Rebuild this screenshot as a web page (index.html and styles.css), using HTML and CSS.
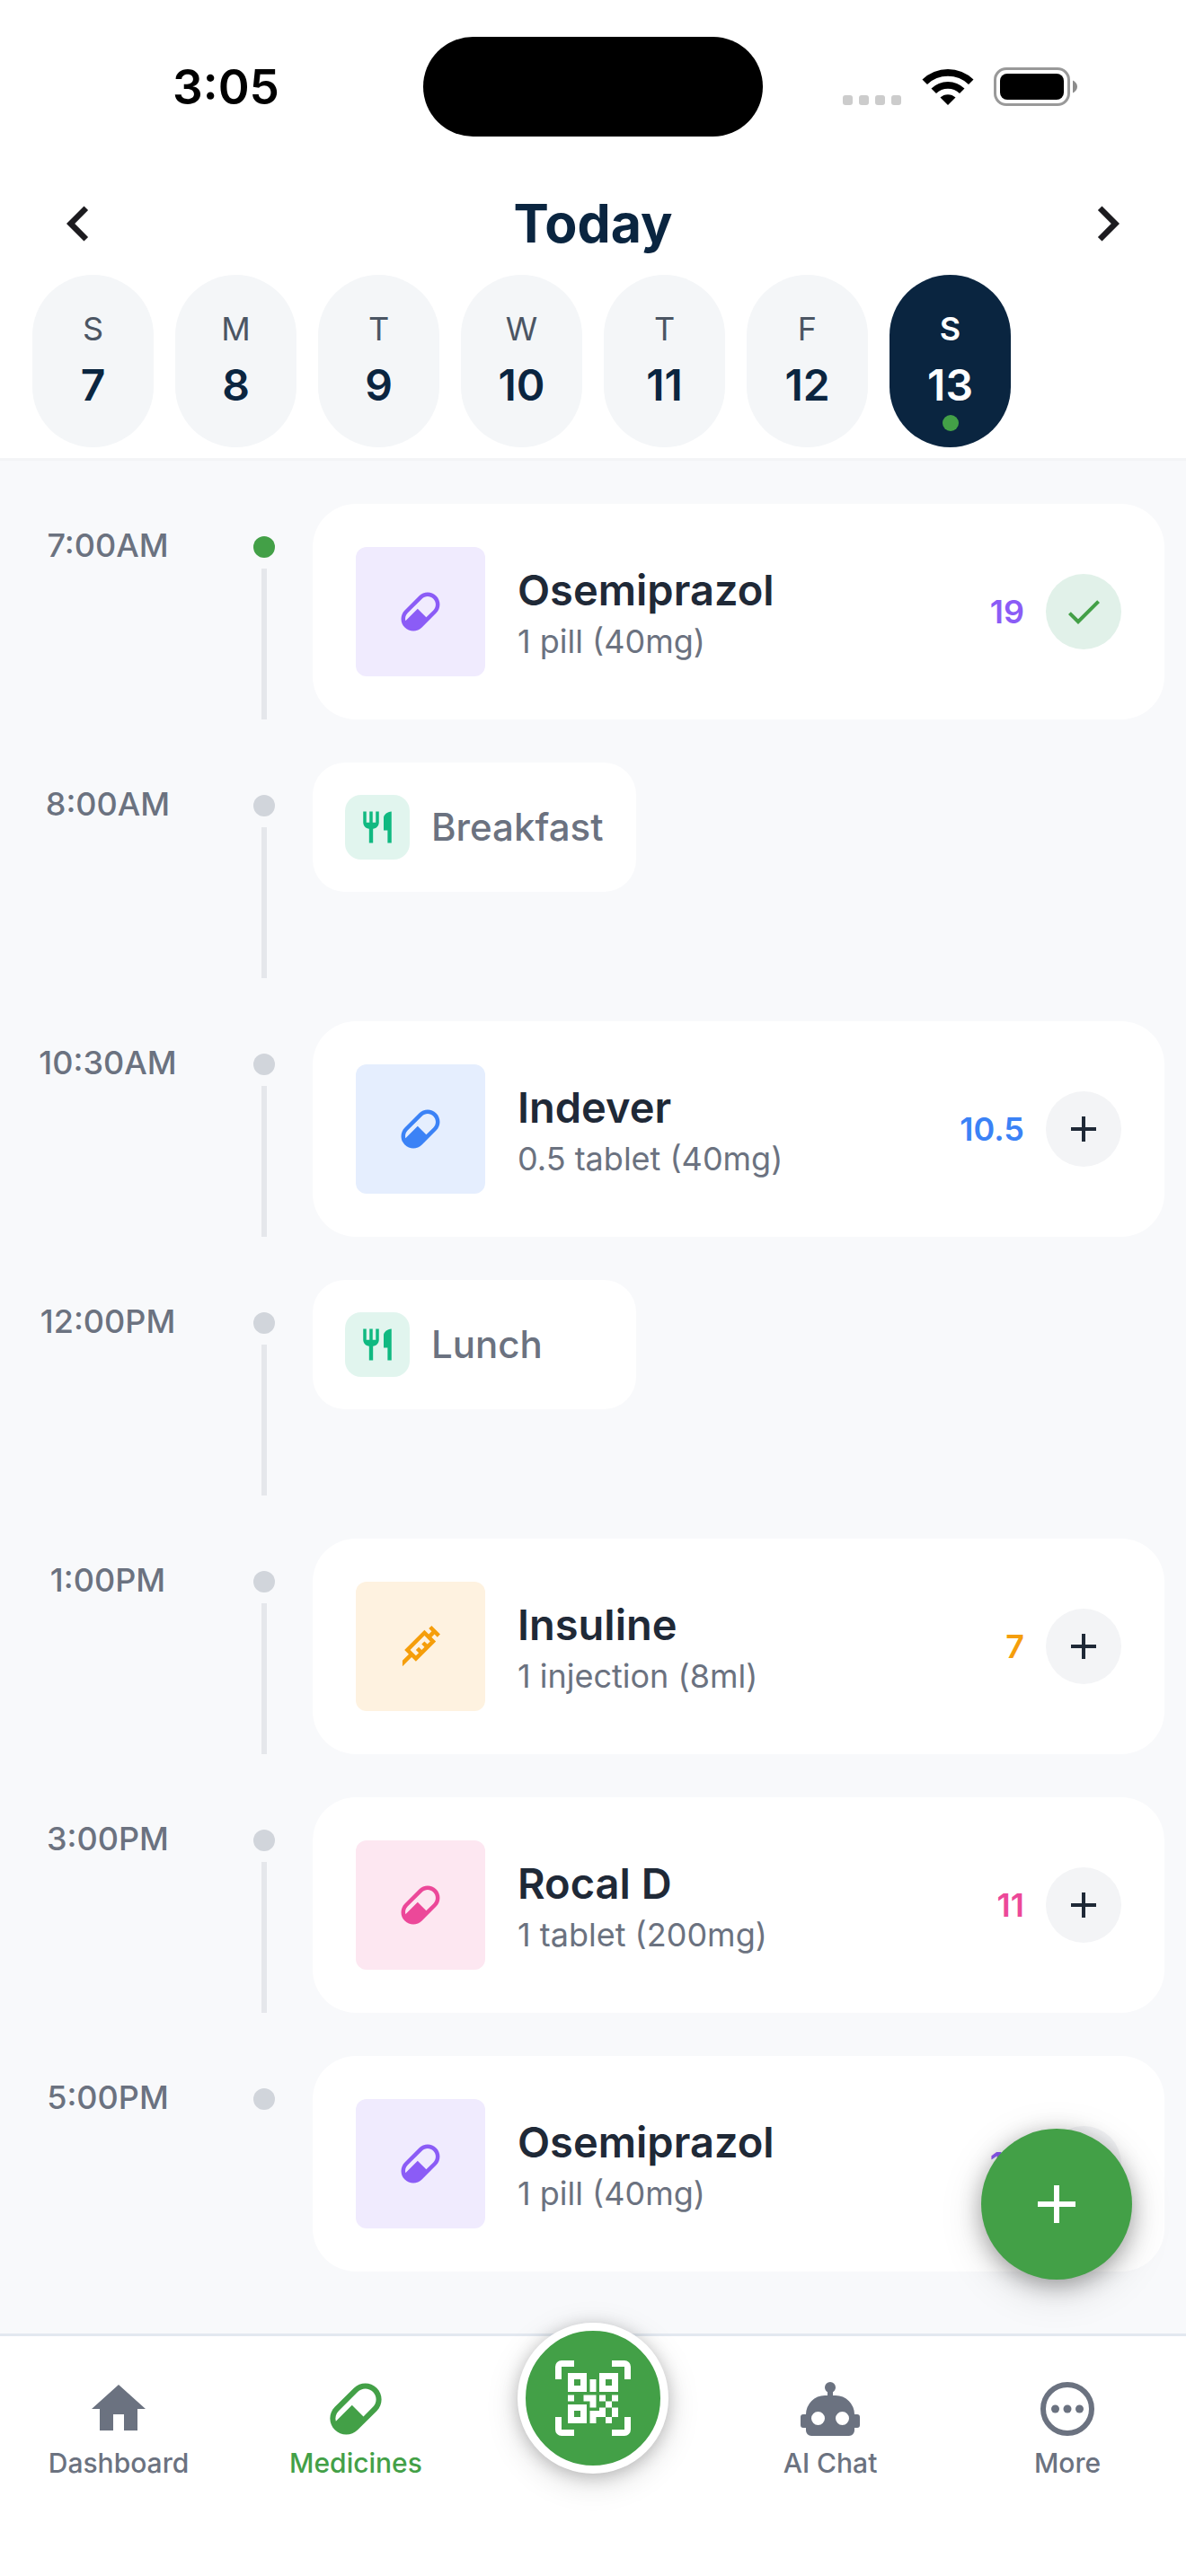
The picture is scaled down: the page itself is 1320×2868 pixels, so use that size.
FILE: index.html
```html
<!DOCTYPE html>
<html lang="en">
<head>
<meta charset="utf-8">
<meta name="viewport" content="width=device-width, initial-scale=1">
<title>Medicines</title>
<link rel="stylesheet" href="styles.css">
</head>
<body>
<svg class="sprite" aria-hidden="true">
  <symbol id="i-left" viewBox="0 0 24 24"><path d="M15.41,16.58L10.83,12L15.41,7.41L14,6L8,12L14,18L15.41,16.58Z"/></symbol>
  <symbol id="i-right" viewBox="0 0 24 24"><path d="M8.59,16.58L13.17,12L8.59,7.41L10,6L16,12L10,18L8.59,16.58Z"/></symbol>
  <symbol id="i-pill" viewBox="0 0 24 24"><path d="M4.22,11.29L11.29,4.22C13.64,1.88 17.43,1.88 19.78,4.22C22.12,6.56 22.12,10.36 19.78,12.71L12.71,19.78C10.36,22.12 6.56,22.12 4.22,19.78C1.88,17.43 1.88,13.64 4.22,11.29M5.64,12.71C4.59,13.75 4.24,15.24 4.6,16.57L10.59,10.59L14.83,14.83L18.36,11.29C19.93,9.73 19.93,7.2 18.36,5.64C16.8,4.07 14.27,4.07 12.71,5.64L5.64,12.71Z"/></symbol>
  <symbol id="i-needle" viewBox="0 0 24 24"><path d="M11.15,15.18L9.73,13.77L11.15,12.35L12.56,13.77L13.97,12.35L12.56,10.94L13.97,9.53L15.39,10.94L16.8,9.53L13.97,6.7L6.9,13.77L9.73,16.6L11.15,15.18M3.08,19L6.2,15.89L4.08,13.77L13.97,3.87L16.1,6L17.5,4.58L16.1,3.16L17.5,1.75L21.75,6L20.34,7.4L18.92,6L17.5,7.4L19.63,9.53L9.73,19.42L7.61,17.3L3.08,21.84V19Z"/></symbol>
  <symbol id="i-meal" viewBox="0 0 24 24"><path d="M11,9H9V2H7V9H5V2H3V9C3,11.12 4.66,12.84 6.75,12.97V22H9.25V12.97C11.34,12.84 13,11.12 13,9V2H11V9M16,6V14H18.5V22H21V2C18.24,2 16,4.24 16,6Z"/></symbol>
  <symbol id="i-check" viewBox="0 0 24 24"><path d="M21,7L9,19L3.5,13.5L4.91,12.09L9,16.17L19.59,5.59L21,7Z"/></symbol>
  <symbol id="i-plus" viewBox="0 0 24 24"><path d="M19,13H13V19H11V13H5V11H11V5H13V11H19V13Z"/></symbol>
  <symbol id="i-home" viewBox="0 0 24 24"><path d="M10,20V14H14V20H19V12H22L12,3L2,12H5V20H10Z"/></symbol>
  <symbol id="i-scan" viewBox="0 0 24 24"><path d="M4,4H10V10H4V4M20,4V10H14V4H20M14,15H16V13H14V11H16V13H18V11H20V13H18V15H20V18H18V20H16V18H13V20H11V16H14V15M16,15V18H18V15H16M4,20V14H10V20H4M6,6V8H8V6H6M16,6V8H18V6H16M6,16V18H8V16H6M4,11H6V13H4V11M9,11H13V15H11V13H9V11M11,6H13V10H11V6M2,2V6H0V2A2,2 0 0,1 2,0H6V2H2M22,0A2,2 0 0,1 24,2V6H22V2H18V0H22M2,18V22H6V24H2A2,2 0 0,1 0,22V18H2M22,22V18H24V22A2,2 0 0,1 22,24H18V22H22Z"/></symbol>
  <symbol id="i-robot" viewBox="0 0 24 24"><path d="M12,2A2,2 0 0,1 14,4C14,4.74 13.6,5.39 13,5.73V7H14A7,7 0 0,1 21,14H22A1,1 0 0,1 23,15V18A1,1 0 0,1 22,19H21V20A2,2 0 0,1 19,22H5A2,2 0 0,1 3,20V19H2A1,1 0 0,1 1,18V15A1,1 0 0,1 2,14H3A7,7 0 0,1 10,7H11V5.73C10.4,5.39 10,4.74 10,4A2,2 0 0,1 12,2M7.5,13A2.5,2.5 0 0,0 5,15.5A2.5,2.5 0 0,0 7.5,18A2.5,2.5 0 0,0 10,15.5A2.5,2.5 0 0,0 7.5,13M16.5,13A2.5,2.5 0 0,0 14,15.5A2.5,2.5 0 0,0 16.5,18A2.5,2.5 0 0,0 19,15.5A2.5,2.5 0 0,0 16.5,13Z"/></symbol>
  <symbol id="i-more" viewBox="0 0 24 24"><circle cx="12" cy="12" r="9" fill="none" stroke="currentColor" stroke-width="2"/><circle cx="7.5" cy="12" r="1.5"/><circle cx="12" cy="12" r="1.5"/><circle cx="16.5" cy="12" r="1.5"/></symbol>
</svg>

<div class="app">
  <header class="top">
    <div class="status">
      <div class="status-side status-left"><span class="clock">3:05</span></div>
      <div class="island"></div>
      <div class="status-side status-right">
        <svg class="signal" viewBox="0 0 66 43" aria-hidden="true"><rect x="0" y="31" width="11" height="11" rx="3"/><rect x="18" y="31" width="11" height="11" rx="3"/><rect x="36" y="31" width="11" height="11" rx="3"/><rect x="54" y="31" width="11" height="11" rx="3"/></svg>
        <svg class="wifi" viewBox="0 0 58 43" aria-hidden="true"><path d="M0.500 13.500A41 41 0 0 1 57.500 13.500L52 19A33 33 0 0 0 6 19Z"/><path d="M10.500 23.500A26.500 26.500 0 0 1 47.500 23.500L42 29A18.500 18.500 0 0 0 16 29Z"/><path d="M20.500 33.500A12.500 12.500 0 0 1 37.500 33.500L29 42Z"/></svg>
        <svg class="battery" viewBox="0 0 94 43" aria-hidden="true"><rect x="1.500" y="1.500" width="82" height="40" rx="12.500" fill="none" stroke="#999" stroke-width="3"/><rect x="7" y="7" width="71" height="29" rx="8"/><path d="M88 14.500C91 16 93 18.500 93 21.500S91 27 88 28.500Z" fill="#8c8c8c"/></svg>
      </div>
    </div>
    <div class="title-row">
      <button class="icon-btn" type="button" aria-label="Previous week"><svg class="chevron"><use href="#i-left"/></svg></button>
      <h1>Today</h1>
      <button class="icon-btn" type="button" aria-label="Next week"><svg class="chevron"><use href="#i-right"/></svg></button>
    </div>
    <div class="days">
      <button class="day" type="button"><span class="dow">S</span><span class="num">7</span></button>
      <button class="day" type="button"><span class="dow">M</span><span class="num">8</span></button>
      <button class="day" type="button"><span class="dow">T</span><span class="num">9</span></button>
      <button class="day" type="button"><span class="dow">W</span><span class="num">10</span></button>
      <button class="day" type="button"><span class="dow">T</span><span class="num">11</span></button>
      <button class="day" type="button"><span class="dow">F</span><span class="num">12</span></button>
      <button class="day selected" type="button" aria-pressed="true"><span class="dow">S</span><span class="num">13</span><span class="today-dot"></span></button>
    </div>
  </header>

  <main class="main">
    <ol class="timeline">
      <li class="slot">
        <time class="time">7:00AM</time>
        <div class="rail done"></div>
        <article class="card purple">
          <div class="thumb"><svg><use href="#i-pill"/></svg></div>
          <div class="info"><h2>Osemiprazol</h2><p>1 pill (40mg)</p></div>
          <span class="stock">19</span>
          <button class="take taken" type="button" aria-label="Taken"><svg><use href="#i-check"/></svg></button>
        </article>
      </li>
      <li class="slot">
        <time class="time">8:00AM</time>
        <div class="rail"></div>
        <div class="meal"><span class="meal-icon"><svg><use href="#i-meal"/></svg></span><span>Breakfast</span></div>
      </li>
      <li class="slot">
        <time class="time">10:30AM</time>
        <div class="rail"></div>
        <article class="card blue">
          <div class="thumb"><svg><use href="#i-pill"/></svg></div>
          <div class="info"><h2>Indever</h2><p>0.5 tablet (40mg)</p></div>
          <span class="stock">10.5</span>
          <button class="take" type="button" aria-label="Mark as taken"><svg><use href="#i-plus"/></svg></button>
        </article>
      </li>
      <li class="slot">
        <time class="time">12:00PM</time>
        <div class="rail"></div>
        <div class="meal"><span class="meal-icon"><svg><use href="#i-meal"/></svg></span><span>Lunch</span></div>
      </li>
      <li class="slot">
        <time class="time">1:00PM</time>
        <div class="rail"></div>
        <article class="card orange">
          <div class="thumb"><svg><use href="#i-needle"/></svg></div>
          <div class="info"><h2>Insuline</h2><p>1 injection (8ml)</p></div>
          <span class="stock">7</span>
          <button class="take" type="button" aria-label="Mark as taken"><svg><use href="#i-plus"/></svg></button>
        </article>
      </li>
      <li class="slot">
        <time class="time">3:00PM</time>
        <div class="rail"></div>
        <article class="card pink">
          <div class="thumb"><svg><use href="#i-pill"/></svg></div>
          <div class="info"><h2>Rocal D</h2><p>1 tablet (200mg)</p></div>
          <span class="stock">11</span>
          <button class="take" type="button" aria-label="Mark as taken"><svg><use href="#i-plus"/></svg></button>
        </article>
      </li>
      <li class="slot">
        <time class="time">5:00PM</time>
        <div class="rail last"></div>
        <article class="card purple">
          <div class="thumb"><svg><use href="#i-pill"/></svg></div>
          <div class="info"><h2>Osemiprazol</h2><p>1 pill (40mg)</p></div>
          <span class="stock">19</span>
          <button class="take" type="button" aria-label="Mark as taken"><svg><use href="#i-plus"/></svg></button>
        </article>
      </li>
    </ol>
    <button class="fab" type="button" aria-label="Add medicine"><svg><use href="#i-plus"/></svg></button>
  </main>

  <nav class="tabs" aria-label="Main">
    <a class="tab" href="#dashboard"><svg><use href="#i-home"/></svg>Dashboard</a>
    <a class="tab active" href="#medicines" aria-current="page"><svg><use href="#i-pill"/></svg>Medicines</a>
    <a class="scan" href="#scan" aria-label="Scan code"><svg><use href="#i-scan"/></svg></a>
    <a class="tab" href="#chat"><svg><use href="#i-robot"/></svg>AI Chat</a>
    <a class="tab" href="#more"><svg><use href="#i-more"/></svg>More</a>
  </nav>
</div>
</body>
</html>
```
FILE: styles.css
```css
:root {
  --navy: #0a2540;
  --ink: #1f2937;
  --muted: #6b7280;
  --green: #43a047;
}

* { box-sizing: border-box; }

body {
  margin: 0;
  font-family: Inter, "Liberation Sans", sans-serif;
  color: var(--ink);
  background: #fff;
}

h1, h2, p, ol { margin: 0; padding: 0; }
button { border: 0; padding: 0; background: none; font: inherit; color: inherit; }
a { color: inherit; text-decoration: none; }
svg { display: block; flex: none; fill: currentColor; }
.sprite { position: absolute; width: 0; height: 0; }

.app { display: flex; flex-direction: column; min-height: 100vh; }

/* Header */
.top { background: #fff; border-bottom: 3px solid #f3f4f6; padding-bottom: 12px; }

.status {
  display: grid;
  grid-template-columns: 1fr 378px 1fr;
  align-items: center;
  padding: 41px 0 40px;
  color: #000;
}
.status-side { display: flex; justify-content: center; align-items: center; }
.status-left { padding-left: 32px; }
.status-right { padding-right: 32px; gap: 22px; }
.clock { font-size: 53px; line-height: 66px; font-weight: 600; }
.island { height: 111px; border-radius: 56px; background: #000; }
.signal { width: 66px; height: 43px; fill: #ccc; }
.wifi { width: 58px; height: 43px; }
.battery { width: 94px; height: 43px; }

.title-row {
  display: flex;
  align-items: center;
  justify-content: space-between;
  height: 114px;
  padding: 0 48px;
}
h1 { font-size: 59px; line-height: 72px; font-weight: 700; color: var(--navy); }
.icon-btn { color: #1c1b1f; }
.chevron { width: 78px; height: 78px; }

.days { display: flex; gap: 24px; padding: 0 36px; }
.day {
  display: flex;
  flex-direction: column;
  align-items: center;
  width: 135px;
  height: 192px;
  padding-top: 36px;
  border-radius: 72px;
  background: #f4f6f8;
  color: var(--navy);
}
.dow { font-size: 36px; line-height: 48px; color: #4b5563; }
.num { margin-top: 9px; font-size: 48px; line-height: 60px; font-weight: 600; }
.today-dot { width: 18px; height: 18px; margin-top: 3px; border-radius: 50%; background: var(--green); }
.day.selected { background: var(--navy); color: #fff; }
.selected .dow { color: #fff; font-weight: 600; }

/* Timeline */
.main { position: relative; flex: 1; background: #f8f9fb; padding: 48px 24px; }
.timeline { display: flex; flex-direction: column; gap: 48px; list-style: none; }
.slot {
  display: grid;
  grid-template-columns: 192px 108px 1fr;
  align-items: start;
  min-height: 240px;
}
.time {
  padding-top: 24px;
  font-size: 36px;
  line-height: 45px;
  font-weight: 500;
  text-align: center;
  color: var(--muted);
}
.rail {
  display: flex;
  flex-direction: column;
  align-items: center;
  gap: 12px;
  align-self: stretch;
  margin: 0 -24px 0 24px;
  padding-top: 36px;
}
.rail::before { content: ""; width: 24px; height: 24px; border-radius: 50%; background: #d1d5db; }
.rail::after { content: ""; width: 6px; flex: 1; background: #e5e7eb; }
.rail.done::before { background: var(--green); }
.rail.last::after { display: none; }

.card, .meal { margin-left: 24px; background: #fff; }
.card {
  display: flex;
  align-items: center;
  padding: 48px;
  border-radius: 48px;
}
.thumb {
  display: grid;
  place-items: center;
  width: 144px;
  height: 144px;
  margin-right: 36px;
  border-radius: 12px;
}
.thumb svg { width: 54px; height: 54px; }
.info { flex: 1; }
h2 { font-size: 47px; line-height: 66px; font-weight: 600; }
.info p { font-size: 36px; line-height: 48px; color: var(--muted); }
.stock { margin-right: 24px; font-size: 36px; line-height: 48px; font-weight: 600; }

.purple .thumb, .purple .stock { color: #8b5cf6; }
.purple .thumb { background: #f0ebfe; }
.blue .thumb, .blue .stock { color: #3b82f6; }
.blue .thumb { background: #e5eefe; }
.orange .thumb, .orange .stock { color: #f59e0b; }
.orange .thumb { background: #fef2e0; }
.pink .thumb, .pink .stock { color: #ec4899; }
.pink .thumb { background: #fde7f1; }

.take {
  display: grid;
  place-items: center;
  width: 84px;
  height: 84px;
  border-radius: 50%;
  background: #f3f4f6;
}
.take svg { width: 48px; height: 48px; }
.taken { background: #e1f1e9; color: var(--green); }

.meal {
  display: flex;
  align-items: center;
  gap: 24px;
  width: 360px;
  padding: 36px;
  border-radius: 36px;
  font-size: 42px;
  line-height: 54px;
  font-weight: 500;
  color: var(--muted);
}
.meal-icon {
  display: grid;
  place-items: center;
  width: 72px;
  height: 72px;
  border-radius: 18px;
  background: #e1f5ee;
  color: #10b981;
}
.meal-icon svg { width: 42px; height: 42px; }

.fab {
  position: absolute;
  right: 60px;
  bottom: 60px;
  display: grid;
  place-items: center;
  width: 168px;
  height: 168px;
  border-radius: 50%;
  background: var(--green);
  color: #fff;
  box-shadow: 0 12px 48px rgba(0, 0, 0, .15), 0 6px 24px rgba(0, 0, 0, .3);
}
.fab svg { width: 72px; height: 72px; }

/* Bottom tabs */
.tabs {
  display: grid;
  grid-template-columns: repeat(5, 1fr);
  justify-items: center;
  align-items: start;
  padding: 45px 0 102px;
  border-top: 3px solid #e2e8f0;
  background: #fff;
  color: var(--muted);
}
.tab {
  display: flex;
  flex-direction: column;
  align-items: center;
  font-size: 30px;
  line-height: 48px;
  font-weight: 500;
}
.tab svg { width: 72px; height: 72px; }
.tab.active { color: var(--green); }
.scan {
  position: relative;
  display: grid;
  place-items: center;
  width: 168px;
  height: 168px;
  margin: -60px 0 -48px;
  border: 9px solid #fff;
  border-radius: 50%;
  background: var(--green);
  color: #fff;
  box-shadow: 0 9px 36px rgba(0, 0, 0, .15), 0 3px 18px rgba(0, 0, 0, .2);
}
.scan svg { width: 84px; height: 84px; }
```
